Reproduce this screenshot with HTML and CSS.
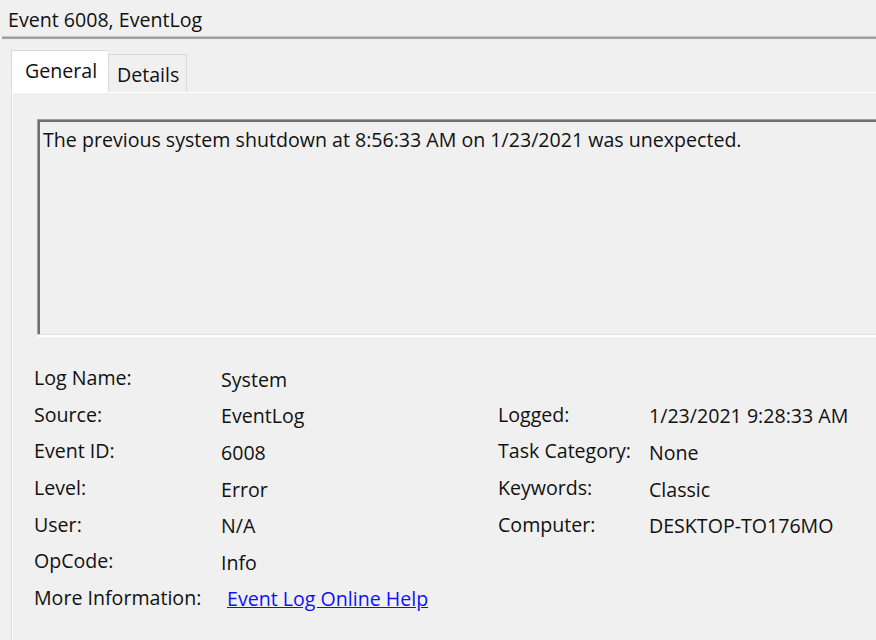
FILE: index.html
```html
<!DOCTYPE html>
<html>
<head>
<meta charset="utf-8">
<link rel="stylesheet" href="styles.css">
</head>
<body>
<div class="title">Event 6008, EventLog</div>
<div class="sep"></div>
<div class="tabs">
  <div class="tab active">General</div>
  <div class="tab">Details</div>
</div>
<div class="panel">
  <div class="message">The previous system shutdown at 8:56:33 AM on 1/23/2021 was unexpected.</div>
  <div class="fields">
    <div class="lbl">Log Name:</div><div class="val">System</div><div class="lbl"></div><div class="val"></div>
    <div class="lbl">Source:</div><div class="val">EventLog</div><div class="lbl">Logged:</div><div class="val">1/23/2021 9:28:33 AM</div>
    <div class="lbl">Event ID:</div><div class="val">6008</div><div class="lbl">Task Category:</div><div class="val">None</div>
    <div class="lbl">Level:</div><div class="val">Error</div><div class="lbl">Keywords:</div><div class="val">Classic</div>
    <div class="lbl">User:</div><div class="val">N/A</div><div class="lbl">Computer:</div><div class="val">DESKTOP-TO176MO</div>
    <div class="lbl">OpCode:</div><div class="val">Info</div><div class="lbl"></div><div class="val"></div>
    <div class="lbl">More Information:</div><div class="val"><a class="link" href="#">Event Log Online Help</a></div><div class="lbl"></div><div class="val"></div>
  </div>
</div>
</body>
</html>
```

FILE: styles.css
```css
html, body {
  margin: 0;
  padding: 0;
  background: #f0f0f0;
  overflow: hidden;
  width: 876px;
  height: 640px;
}
body {
  font-family: "Open Sans", "Noto Sans", sans-serif;
  font-size: 19.6px;
  color: #111;
}
.title {
  height: 36px;
  line-height: 36px;
  padding-left: 8px;
  box-sizing: border-box;
  padding-top: 2px;
}
.sep {
  margin-left: 2px;
  height: 3px;
  background: linear-gradient(#c4c4c4 0, #c4c4c4 1px, #a0a0a0 1px, #a0a0a0 3px);
}
.tabs {
  display: flex;
  align-items: flex-end;
  margin-top: 11px;
  margin-left: 11px;
  height: 42px;
}
.tab {
  box-sizing: border-box;
  border: 1px solid #d9d9d9;
  border-bottom: none;
  background: #f0f0f0;
  height: 38px;
  padding: 0 0 0 8px;
  width: 79px;
  line-height: 40px;
}
.tab.active {
  background: #fff;
  height: 42px;
  width: 97px;
  padding-left: 13px;
  line-height: 40px;
  border-right: none;
}
.panel {
  margin-left: 11px;
  width: 900px;
  height: 560px;
  border-left: 1px solid #dadada;
  box-shadow: inset 1px 0 0 #fff;
  border-top: 1px solid #fff;
  box-sizing: border-box;
  padding-top: 26px;
}
.message {
  margin-left: 25px;
  height: 216px;
  box-sizing: border-box;
  border-top: 1px solid #a0a0a0;
  border-left: 1px solid #a0a0a0;
  border-bottom: 1px solid #e3e3e3;
  box-shadow: inset 2px 2px 0 #707070, 0 2px 0 #fff;
  padding: 7px 0 0 5px;
  line-height: 26px;
}
.fields {
  margin-top: 26px;
  margin-left: 22px;
  display: grid;
  grid-template-columns: 187px 277px 151px auto;
  grid-auto-rows: 36.6px;
  align-items: center;
}
.lbl {
  padding-bottom: 3px;
  white-space: nowrap;
}
.val {
  white-space: nowrap;
}
.link {
  color: #1010ff;
  text-decoration: underline;
  margin-left: 6px;
}
```
